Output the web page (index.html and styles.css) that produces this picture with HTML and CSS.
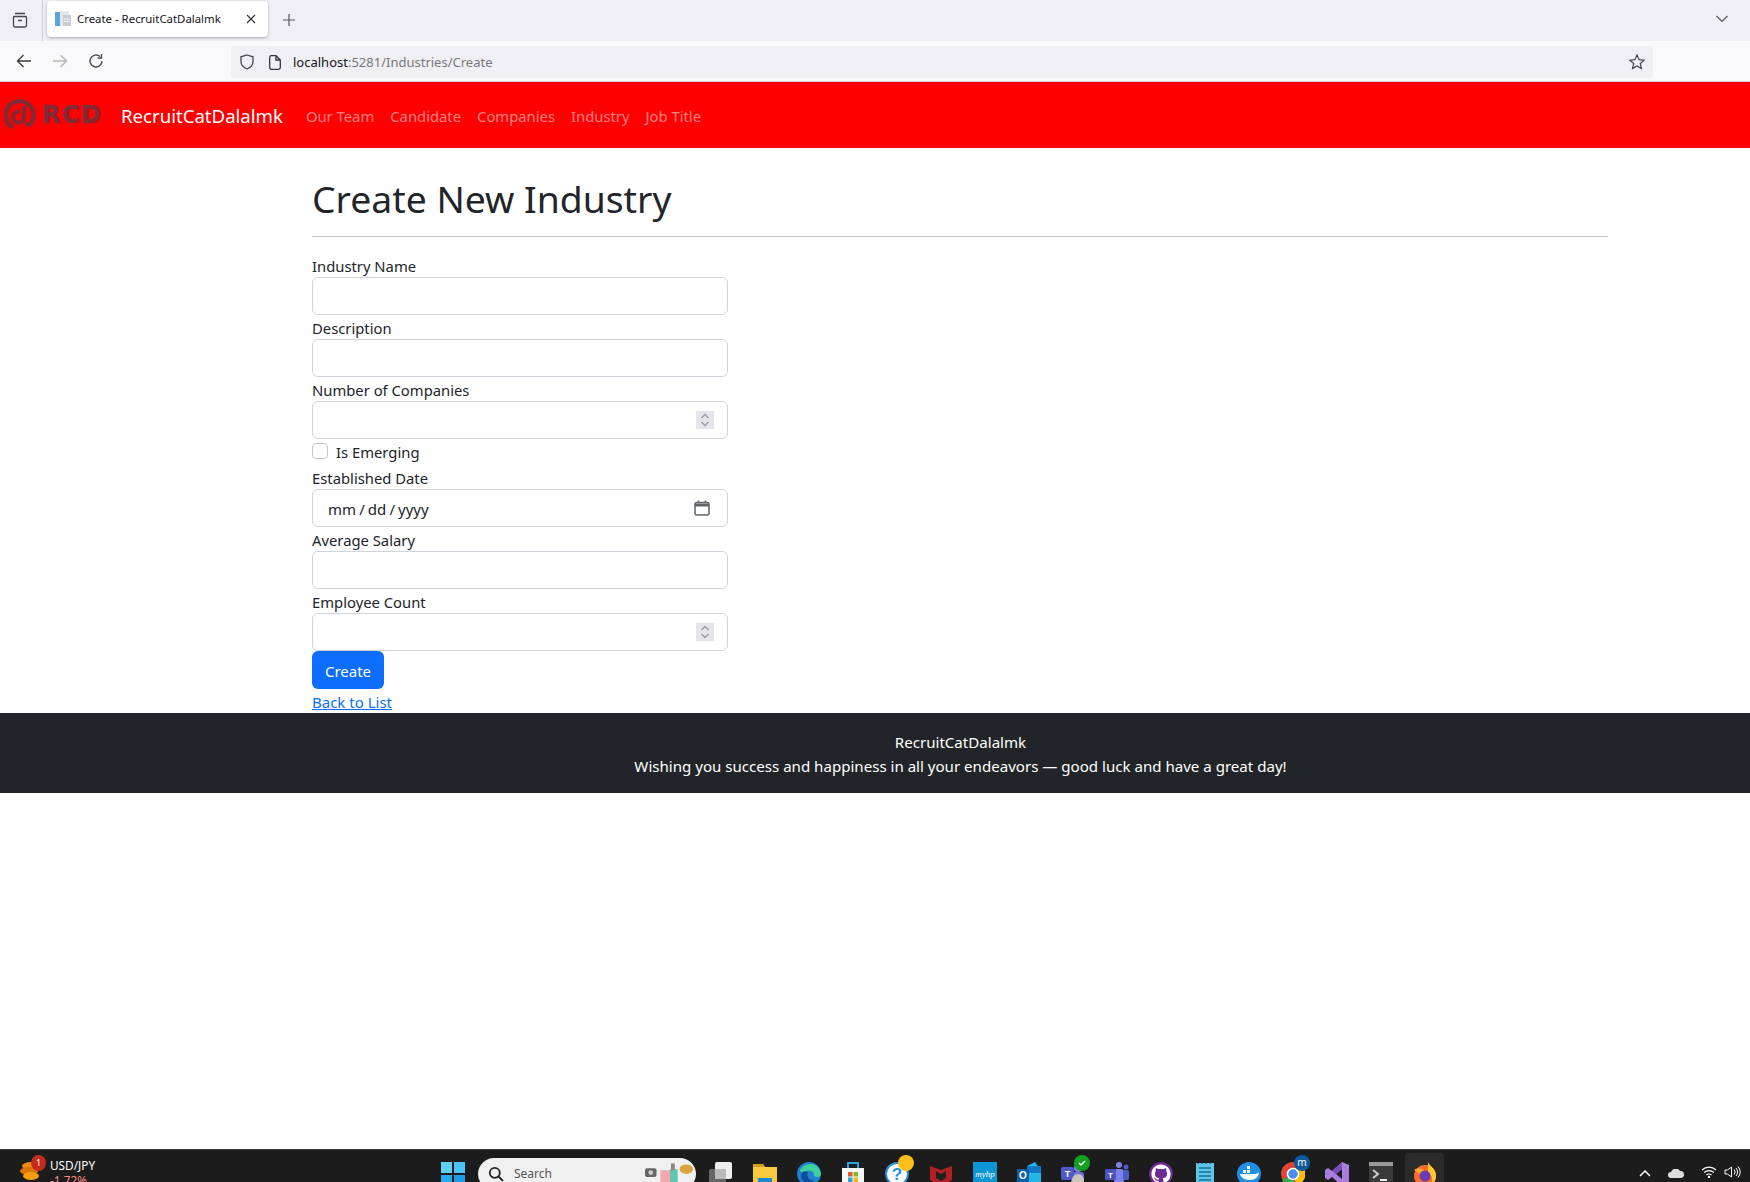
FILE: index.html
```html
<!DOCTYPE html>
<html lang="en">

<head>
    <meta charset="UTF-8">
    <meta name="viewport" content="width=device-width, initial-scale=1.0">
    <title>Create - RecruitCatDalalmk</title>
    <link rel="stylesheet" href="styles.css">
</head>

<body>
    <div class="tabstrip">
        <div class="tabstrip-left">
            <svg class="ico16" viewBox="0 0 16 16" fill="none" stroke="#45454f" stroke-width="1.3"><path d="M3 1.500h10M1.500 5.500a1 1 0 0 1 1-1h11a1 1 0 0 1 1 1v8a1.500 1.500 0 0 1-1.500 1.500H3a1.500 1.500 0 0 1-1.500-1.500zM6 8.500h4"/></svg>
        </div>
        <div class="tab">
            <svg class="favicon" viewBox="0 0 16 16"><rect x="0" y="1" width="5" height="14" fill="#5aa5dc"/><rect x="5" y="0" width="9" height="15" fill="#e3e6ea"/><rect x="8" y="4" width="8" height="11" fill="#c9ced4"/><path d="M9 8h6M9 10.500h6" stroke="#f3f4f5"/></svg>
            <span class="tab-title">Create - RecruitCatDalalmk</span>
            <svg class="tab-close" viewBox="0 0 10 10" stroke="#30303a" stroke-width="1.100"><path d="M1 1l8 8M9 1l-8 8"/></svg>
        </div>
        <svg class="new-tab" viewBox="0 0 12 12" stroke="#55555f" stroke-width="1.200"><path d="M6 0v12M0 6h12"/></svg>
        <svg class="tabs-menu" viewBox="0 0 12 8" fill="none" stroke="#55555f" stroke-width="1.200"><path d="M0.500 1l5.500 5.500L11.500 1"/></svg>
    </div>

    <div class="toolbar">
        <svg class="nav-btn" viewBox="0 0 16 16" fill="none" stroke="#3c3c46" stroke-width="1.400"><path d="M15 8H1.500M7.500 2L1.500 8l6 6"/></svg>
        <svg class="nav-btn" viewBox="0 0 16 16" fill="none" stroke="#b4b4bb" stroke-width="1.400"><path d="M1 8h13.500M8.500 2l6 6-6 6"/></svg>
        <svg class="nav-btn" viewBox="0 0 16 16" fill="none" stroke="#4a4a54" stroke-width="1.400"><path d="M14 8a6 6 0 1 1-2-4.500"/><path d="M13.500 1v4h-4" stroke-width="1.300"/></svg>
        <div class="urlbar">
            <svg class="ico-shield" viewBox="0 0 14 16" fill="none" stroke="#45454f" stroke-width="1.300"><path d="M7 1l6 1.800v4.700c0 3.500-2.500 6-6 7.500-3.500-1.500-6-4-6-7.500V2.800z"/></svg>
            <svg class="ico-doc" viewBox="0 0 12 15" fill="none" stroke="#33333d" stroke-width="1.300"><path d="M2 .7h5l4.300 4.300v7.500a1.800 1.800 0 0 1-1.800 1.800h-7.500a1.800 1.800 0 0 1-1.300-1.800V2.500A1.800 1.800 0 0 1 2 .7zM7 .7V5h4.300"/></svg>
            <span class="url"><span class="url-host">localhost</span>:5281/Industries/Create</span>
            <svg class="ico-star" viewBox="0 0 16 16" fill="none" stroke="#45454f" stroke-width="1.200"><path d="M8 1l2.100 4.700 5 .5-3.800 3.300 1.100 5L8 11.900l-4.400 2.600 1.100-5L.9 6.200l5-.5z"/></svg>
        </div>
    </div>

    <nav class="navbar">
        <a class="logo" href="#">
            <svg class="logo-mark" viewBox="0 0 32 32" fill="none" stroke="#7f2a35" stroke-width="4.500"><path d="M9 28.500A14 14 0 1 1 26 25.500L21 25"/><path d="M20 7v11a5.500 5.500 0 1 1-6-5.500h2" stroke-width="4"/></svg>
            <span class="logo-text">RCD</span>
        </a>
        <a class="brand" href="#">RecruitCatDalalmk</a>
        <ul class="nav-links">
            <li><a href="#">Our Team</a></li>
            <li><a href="#">Candidate</a></li>
            <li><a href="#">Companies</a></li>
            <li><a href="#">Industry</a></li>
            <li><a href="#">Job Title</a></li>
        </ul>
    </nav>

    <main class="content">
        <h1>Create New Industry</h1>
        <hr>
        <form class="create-form">
            <label for="name">Industry Name</label>
            <input class="form-control" id="name" type="text">
            <label for="description">Description</label>
            <input class="form-control" id="description" type="text">
            <label for="companies">Number of Companies</label>
            <div class="form-control field-row">
                <input class="bare-input" id="companies" type="text">
                <span class="spin">
                    <svg viewBox="0 0 10 14" fill="none" stroke="#9a9aa4" stroke-width="1.300"><path d="M1.500 5L5 1.500 8.500 5M1.500 9L5 12.500 8.500 9"/></svg>
                </span>
            </div>
            <div class="check-row">
                <input class="check" id="emerging" type="checkbox">
                <label for="emerging">Is Emerging</label>
            </div>
            <label for="established">Established Date</label>
            <div class="form-control field-row date-field">
                <span id="established">mm / dd / yyyy</span>
                <svg class="calendar" viewBox="0 0 16 16" fill="none" stroke="#5f636a" stroke-width="1.500"><rect x="1" y="2.500" width="14" height="12.500" rx="2"/><path d="M1 5h14" stroke-width="3"/><path d="M4.500 0.500v2.500M11.500 0.500v2.500"/></svg>
            </div>
            <label for="salary">Average Salary</label>
            <input class="form-control" id="salary" type="text">
            <label for="employees">Employee Count</label>
            <div class="form-control field-row">
                <input class="bare-input" id="employees" type="text">
                <span class="spin">
                    <svg viewBox="0 0 10 14" fill="none" stroke="#9a9aa4" stroke-width="1.300"><path d="M1.500 5L5 1.500 8.500 5M1.500 9L5 12.500 8.500 9"/></svg>
                </span>
            </div>
            <button class="btn-create" type="button">Create</button>
        </form>
        <a class="back-link" href="#">Back to List</a>
    </main>

    <footer class="footer">
        <div>RecruitCatDalalmk</div>
        <div>Wishing you success and happiness in all your endeavors — good luck and have a great day!</div>
    </footer>

    <div class="taskbar">
        <div class="widget">
            <svg class="coin" viewBox="0 0 20 26"><ellipse cx="11" cy="5" rx="9" ry="4" fill="#ee8a12"/><ellipse cx="9" cy="10" rx="9" ry="4" fill="#d97706"/><ellipse cx="11" cy="15" rx="8" ry="4" fill="#f59e0b"/><path d="M7 22l4 3 4-3" stroke="#d9480f" stroke-width="3" fill="none"/></svg>
            <span class="badge">1</span>
            <div class="widget-text">
                <div>USD/JPY</div>
                <div class="widget-down">-1.72%</div>
            </div>
        </div>
        <svg class="tb-start" viewBox="0 0 24 24"><rect width="11" height="11" fill="#5fd0f7"/><rect x="13" width="11" height="11" fill="#4cc2f5"/><rect y="13" width="11" height="11" fill="#27a9ee"/><rect x="13" y="13" width="11" height="11" fill="#1d9cea"/></svg>
        <div class="tb-search">
            <svg viewBox="0 0 16 16" fill="none" stroke="#222" stroke-width="1.800"><circle cx="6.800" cy="6.800" r="5"/><path d="M10.500 10.500L15 15"/></svg>
            <span>Search</span>
            <svg class="search-art" viewBox="0 0 52 24"><rect x="0" y="6" width="12" height="9" rx="2" fill="#666"/><circle cx="6" cy="10.500" r="2.500" fill="#ccc"/><rect x="16" y="8" width="10" height="16" fill="#f2a7ad"/><rect x="26" y="7" width="8" height="17" fill="#5fc7b0"/><rect x="27" y="1" width="4" height="7" fill="#888"/><ellipse cx="43" cy="7" rx="7" ry="5" fill="#d9a441"/></svg>
        </div>
        <div class="tb-icons">
            <svg viewBox="0 0 24 24"><rect x="6" y="0" width="17" height="17" rx="2" fill="#eee"/><rect x="0" y="7" width="17" height="17" rx="2" fill="#666"/><rect x="6" y="7" width="11" height="10" fill="#bbb"/></svg>
            <svg viewBox="0 0 24 24"><path d="M0 2h10l2 3h12v19H0z" fill="#f7c93e"/><path d="M0 2h10l2 3H0z" fill="#d59f1e"/><rect x="5" y="16" width="14" height="8" fill="#1c8ad8"/></svg>
            <svg viewBox="0 0 24 24"><circle cx="12" cy="12" r="12" fill="#1f7fd0"/><path d="M3 8C8-1 22 0 24 12c0 3-4 4-7 2 1-3-2-6-6-5-5 1-7 3-8-1z" fill="#3fd0a0"/><path d="M4 14c0-4 4-6 7-4-2 3 0 8 6 9-5 5-13 1-13-5z" fill="#0c4e98"/></svg>
            <svg viewBox="0 0 24 24"><rect x="1" y="6" width="22" height="18" fill="#f7f7f7"/><path d="M7 6V1h10v5" fill="none" stroke="#2aa5e0" stroke-width="2"/><rect x="7" y="10" width="4.500" height="4.500" fill="#e8542f"/><rect x="12.500" y="10" width="4.500" height="4.500" fill="#7eba2a"/><rect x="7" y="15.500" width="4.500" height="4.500" fill="#2aa5e0"/><rect x="12.500" y="15.500" width="4.500" height="4.500" fill="#fbb316"/></svg>
            <span class="tb-with-dot dot-amber">
                <svg viewBox="0 0 24 24"><circle cx="12" cy="12" r="11" fill="#fff" stroke="#2a8fd8" stroke-width="2"/><text x="12" y="18" text-anchor="middle" font-size="17" font-weight="700" font-family="Liberation Sans, sans-serif" fill="#2a8fd8">?</text></svg>
            </span>
            <svg viewBox="0 0 24 24"><path d="M1 4l11 4 11-4v14l-11 6-11-6z" fill="#b32024"/><path d="M7 9l5 3 5-3v7l-5 3-5-3z" fill="#202020"/></svg>
            <svg viewBox="0 0 24 24"><rect width="24" height="24" fill="#0d96d6"/><text x="12" y="15" text-anchor="middle" font-size="9" font-style="italic" font-family="Liberation Serif, serif" fill="#fff">myhp</text></svg>
            <svg viewBox="0 0 24 24"><path d="M10 4l8-4 6 8v12l-6 4H10z" fill="#21b5e8"/><path d="M10 4h14v7H10z" fill="#0f78c8"/><rect x="0" y="7" width="12" height="13" fill="#0f5ea8"/><text x="6" y="17" text-anchor="middle" font-size="10" font-weight="700" font-family="Liberation Sans, sans-serif" fill="#fff">O</text></svg>
            <span class="tb-with-dot dot-green">
                <svg viewBox="0 0 24 24"><circle cx="17" cy="6" r="4" fill="#7b83eb"/><rect x="10" y="10" width="13" height="12" rx="3" fill="#6a72d8"/><rect x="0" y="5" width="13" height="13" rx="2" fill="#5059c9"/><text x="6.500" y="15" text-anchor="middle" font-size="9" font-weight="700" font-family="Liberation Sans, sans-serif" fill="#fff">T</text><circle cx="17" cy="18" r="6" fill="#c9c4bc"/></svg>
                <svg class="tick" viewBox="0 0 10 10" fill="none" stroke="#fff" stroke-width="1.500"><path d="M2 5l2 2 4-4"/></svg>
            </span>
            <svg viewBox="0 0 24 24"><circle cx="14" cy="3" r="3" fill="#7b83eb"/><circle cx="21" cy="5" r="2.500" fill="#5059c9"/><rect x="9" y="7" width="10" height="14" rx="3" fill="#7b83eb"/><rect x="18" y="8" width="6" height="10" rx="2" fill="#5059c9"/><rect x="0" y="7" width="11" height="11" rx="1.500" fill="#4b53bc"/><text x="5.500" y="15.500" text-anchor="middle" font-size="8" font-weight="700" font-family="Liberation Sans, sans-serif" fill="#fff">T</text></svg>
            <svg viewBox="0 0 24 24"><circle cx="12" cy="12" r="12" fill="#6e2c91"/><path transform="translate(2.400 2.400) scale(1.200)" fill="#fff" d="M8 0C3.580 0 0 3.580 0 8c0 3.540 2.290 6.530 5.470 7.590.4.07.55-.17.55-.38 0-.19-.01-.82-.01-1.490-2.010.37-2.530-.49-2.690-.94-.09-.23-.48-.94-.82-1.130-.28-.15-.68-.52-.01-.53.63-.01 1.080.58 1.230.82.72 1.210 1.870.87 2.330.66.07-.52.28-.87.51-1.070-1.780-.2-3.640-.89-3.640-3.950 0-.87.31-1.590.82-2.150-.08-.2-.36-1.020.08-2.120 0 0 .67-.21 2.200.82.64-.18 1.320-.27 2-.27.68 0 1.360.09 2 .27 1.530-1.040 2.200-.82 2.200-.82.44 1.100.16 1.920.08 2.120.51.56.82 1.270.82 2.150 0 3.070-1.870 3.750-3.650 3.950.29.25.54.73.54 1.480 0 1.070-.01 1.930-.01 2.200 0 .21.15.46.55.38A8.013 8.013 0 0 0 16 8c0-4.420-3.580-8-8-8z"/></svg>
            <svg viewBox="0 0 24 24"><rect x="3" y="1" width="18" height="23" fill="#5fc6ea"/><path d="M6 6h12M6 10h12M6 14h12M6 18h12" stroke="#176f93" stroke-width="1.500"/><path d="M5 0v2M9 0v2M13 0v2M17 0v2" stroke="#2b2b2b"/></svg>
            <svg viewBox="0 0 24 24"><circle cx="12" cy="12" r="12" fill="#1d8fe6"/><path d="M3 12h15c2 0 3-1 4-2 0 5-4 8-9 8-5 0-9-2-10-6z" fill="#fff"/><path d="M6 8h3v3H6zM10 8h3v3h-3zM10 4h3v3h-3z" fill="#fff"/></svg>
            <span class="tb-with-dot dot-blue">
                <svg viewBox="0 0 24 24"><circle cx="12" cy="12" r="12" fill="#e04434"/><path d="M12 12L1 18a12 12 0 0 0 14 5.500z" fill="#36a852"/><path d="M12 6h11a12 12 0 0 1-8 17.500z" fill="#fbbc04"/><circle cx="12" cy="12" r="5.500" fill="#4b8df0" stroke="#fff" stroke-width="1.500"/></svg>
                <span class="dot-letter">m</span>
            </span>
            <svg viewBox="0 0 24 24"><path d="M17 0l7 3v18l-7 3-10-9-4 3-3-2V8l3-2 4 3z" fill="#a97de0"/><path d="M17 7l-6 5 6 5z" fill="#1f1f1f"/><path d="M17 0L7 9l4 3 6-5z" fill="#7a4cb8"/></svg>
            <svg viewBox="0 0 24 24"><rect width="24" height="24" rx="2" fill="#3a3a3a"/><rect width="24" height="4" fill="#9a9a9a"/><path d="M4 8l5 4-5 4" fill="none" stroke="#ccc" stroke-width="2"/><path d="M11 18h7" stroke="#eee" stroke-width="2"/></svg>
            <span class="tb-active">
                <svg viewBox="0 0 24 24"><circle cx="12" cy="14" r="11" fill="#ff6a2b"/><path d="M15 0c2 5 8 6 8 14 0 5-3 8-6 9 4-4 2-10-2-12z" fill="#ffcb2e"/><path d="M1 8c3-2 8-2 10 1l-4 3z" fill="#ffa72e"/><circle cx="12" cy="14" r="5.500" fill="#6b3bb8"/></svg>
            </span>
        </div>
        <div class="tray">
            <svg class="tray-chev" viewBox="0 0 12 7" fill="none" stroke="#fff" stroke-width="1.500"><path d="M1 6l5-5 5 5"/></svg>
            <svg class="tray-cloud" viewBox="0 0 16 9"><path d="M3 9a3 3 0 0 1 0-6 5 5 0 0 1 9-1 3.500 3.500 0 0 1 1 7z" fill="#ddd"/></svg>
            <svg class="tray-wifi" viewBox="0 0 16 12" fill="none" stroke="#fff" stroke-width="1.100"><path d="M1 4a10 10 0 0 1 14 0M3.200 6.500a7 7 0 0 1 9.600 0M5.500 9a3.500 3.500 0 0 1 5 0"/><circle cx="8" cy="11" r=".6" fill="#fff"/></svg>
            <svg class="tray-sound" viewBox="0 0 17 12" fill="none" stroke="#fff" stroke-width="1"><path d="M1 4h2.500L7.500 1v10l-4-3H1zM10 3.500a3.500 3.500 0 0 1 0 5M12 2a6 6 0 0 1 0 8M14 .5a8 8 0 0 1 0 11"/></svg>
        </div>
    </div>
</body>

</html>
```

FILE: styles.css
```css
html,
body {
    height: 100%;
}

body {
    margin: 0px;
    height: 100vh;
    overflow: hidden;
    display: flex;
    flex-direction: column;
    font-family: "Noto Sans", "Liberation Sans", sans-serif;
    font-size: 15px;
    line-height: 24px;
    color: #212529;
    background: #fff;
}

svg {
    display: block;
    flex: none;
}

a {
    text-decoration: none;
}

/* browser chrome */
.tabstrip {
    height: 41px;
    background: #f0eff4;
    display: flex;
    align-items: flex-start;
    flex: none;
}

.tabstrip-left {
    width: 43px;
    height: 41px;
    box-sizing: border-box;
    padding: 12px;
    border-right: 1px solid #cfcfd6;
}

.ico16 {
    width: 16px;
    height: 16px;
}

.tab {
    margin: 1px 0px 0px 4px;
    width: 221px;
    height: 36px;
    box-sizing: border-box;
    padding: 0px 12px 0px 8px;
    background: #fff;
    border-radius: 4px;
    box-shadow: 0 1px 3px rgba(0, 0, 0, .3);
    display: flex;
    align-items: center;
    font-size: 11.400px;
    color: #15141a;
}

.favicon {
    width: 16px;
    height: 16px;
    margin-right: 6px;
}

.tab-title {
    flex: 1;
    white-space: nowrap;
}

.tab-close {
    width: 10px;
    height: 10px;
}

.new-tab {
    width: 12px;
    height: 12px;
    margin: 14px 0px 0px 15px;
}

.tabs-menu {
    width: 12px;
    height: 8px;
    margin: 15px 22px 0px auto;
}

.toolbar {
    height: 41px;
    box-sizing: border-box;
    background: #f9f9fb;
    border-bottom: 1px solid #cfcfd8;
    display: flex;
    align-items: center;
    padding-left: 16px;
    flex: none;
}

.nav-btn {
    width: 16px;
    height: 16px;
    margin-right: 20px;
}

.urlbar {
    margin-left: 107px;
    margin-top: 2px;
    width: 1422px;
    height: 32px;
    box-sizing: border-box;
    padding: 0px 8px 0px 9px;
    background: #f0f0f4;
    border-radius: 4px;
    display: flex;
    align-items: center;
    font-size: 13px;
    color: #77777f;
}

.ico-shield {
    width: 14px;
    height: 16px;
    margin-right: 15px;
}

.ico-doc {
    width: 12px;
    height: 15px;
    margin-right: 12px;
}

.url {
    flex: 1;
}

.url-host {
    color: #15141a;
}

.ico-star {
    width: 16px;
    height: 16px;
}

/* site */
.navbar {
    height: 66px;
    box-sizing: border-box;
    background: #f00;
    display: flex;
    align-items: center;
    padding: 2px 0px 0px 4px;
    flex: none;
}

.logo {
    display: flex;
    align-items: center;
    width: 117px;
    gap: 6px;
    margin-top: -2px;
}

.logo-mark {
    width: 32px;
    height: 32px;
}

.logo-text {
    font-family: "DejaVu Sans", sans-serif;
    font-weight: 700;
    font-size: 24px;
    letter-spacing: 1.500px;
    -webkit-text-stroke: .6px #7f2a35;
    color: #7f2a35;
}

.brand {
    font-size: 18.600px;
    color: #fff;
    margin-right: 23px;
    white-space: nowrap;
}

.nav-links {
    display: flex;
    gap: 16px;
    list-style: none;
    margin: 0px;
    padding: 0px;
    font-size: 14.800px;
}

.nav-links a {
    color: rgba(255, 255, 255, .5);
}

.content {
    padding: 0px 141px 0px 312px;
    flex: none;
}

h1 {
    font-size: 37.300px;
    font-weight: 400;
    line-height: 48px;
    margin: 0px;
    padding-top: 27px;
}

hr {
    border: 0;
    border-top: 1px solid #c8c8c8;
    margin: 13px 1px 0px 0px;
    height: 0px;
}

.create-form {
    width: 416px;
    padding-top: 16px;
    display: flex;
    flex-direction: column;
    align-items: flex-start;
}

.create-form label {
    height: 24px;
    line-height: 26px;
    font-size: 14.800px;
}

.create-form .check-row label {
    line-height: 24px;
}

.form-control {
    width: 416px;
    height: 38px;
    box-sizing: border-box;
    border: 1px solid #ced4da;
    border-radius: 6px;
    background: #fff;
    padding: 6px 12px;
    font: inherit;
    flex: none;
}

.field-row {
    display: flex;
    align-items: center;
    justify-content: space-between;
}

.bare-input {
    border: 0;
    outline: 0;
    padding: 0px;
    font: inherit;
    flex: 1;
    min-width: 0;
}

.spin {
    width: 18px;
    height: 18px;
    background: #e4e4ea;
    display: flex;
    align-items: center;
    justify-content: center;
    margin-right: 1px;
}

.spin svg {
    width: 10px;
    height: 14px;
}

.date-field {
    padding: 7px 17px 5px 15px;
    word-spacing: -.8px;
}

.calendar {
    width: 16px;
    height: 16px;
    margin-top: -2px;
}

.check-row {
    height: 26px;
    display: flex;
    align-items: center;
    gap: 8px;
}

.check {
    appearance: none;
    width: 16px;
    height: 16px;
    box-sizing: border-box;
    margin: 0px 0px 2px 0px;
    border: 1px solid #c4c8cc;
    border-radius: 4px;
    background: #fff;
}

.btn-create {
    width: 72px;
    height: 38px;
    border: 0;
    border-radius: 6px;
    background: #0d6efd;
    color: #fff;
    font: inherit;
    padding: 2px 0px 0px 0px;
}

.back-link {
    color: #0d6efd;
    text-decoration: underline;
    display: block;
    width: fit-content;
    height: 24px;
    line-height: 26px;
}

.footer {
    height: 80px;
    box-sizing: border-box;
    margin-top: 0px;
    padding: 17px 141px 0px 312px;
    background: #212529;
    color: #fff;
    font-size: 15.080px;
    text-align: center;
    flex: none;
}

/* windows taskbar, cut off by the bottom of the shot */
.taskbar {
    margin-top: auto;
    height: 33px;
    flex: none;
    background: #1c1c1c;
    border-top: 1px solid #3a3a3a;
    box-sizing: border-box;
    display: flex;
    align-items: flex-start;
    position: relative;
    overflow: hidden;
    color: #fff;
}

.widget {
    width: 441px;
    height: 32px;
    display: flex;
    padding-left: 20px;
    box-sizing: border-box;
    position: relative;
}

.coin {
    width: 20px;
    height: 26px;
    margin-top: 11px;
}

.badge {
    position: absolute;
    left: 31px;
    top: 5px;
    width: 15px;
    height: 16px;
    border-radius: 50%;
    background: #c42b1c;
    color: #fff;
    font-size: 9px;
    line-height: 16px;
    text-align: center;
}

.widget-text {
    margin-left: 10px;
    font-size: 11.800px;
    line-height: 15px;
    padding-top: 8px;
}

.widget-down {
    color: #f48a8a;
}

.tb-start {
    width: 24px;
    height: 24px;
    margin-top: 12px;
}

.tb-search {
    margin: 8px 0px 0px 13px;
    width: 218px;
    height: 32px;
    box-sizing: border-box;
    border-radius: 16px;
    background: #f0f0f0;
    color: #555;
    display: flex;
    align-items: center;
    padding: 0px 0px 0px 10px;
    font-size: 12px;
    gap: 10px;
}

.tb-search > svg:first-child {
    width: 16px;
    height: 16px;
}

.search-art {
    width: 50px;
    height: 24px;
    margin-left: auto;
    margin-right: 1px;
}

.tb-icons {
    margin-left: 13px;
    padding-top: 12px;
    display: flex;
    gap: 20px;
}

.tb-icons svg {
    width: 24px;
    height: 24px;
}

.tb-with-dot {
    display: block;
    width: 24px;
    height: 24px;
    position: relative;
}

.tb-with-dot::after {
    content: "";
    position: absolute;
    left: 13px;
    top: -7px;
    width: 16px;
    height: 16px;
    border-radius: 50%;
}

.dot-amber::after {
    background: #fbbf1a;
}

.dot-green::after {
    background: #12a11e;
}

.dot-blue::after {
    background: #0f5a9e;
}

.tb-with-dot .tick {
    position: absolute;
    left: 16px;
    top: -4px;
    width: 10px;
    height: 10px;
    z-index: 1;
}

.dot-letter {
    position: absolute;
    left: 13px;
    top: -7px;
    width: 16px;
    height: 16px;
    font-size: 10px;
    line-height: 14px;
    text-align: center;
    color: #fff;
    z-index: 1;
}

.tb-active {
    display: block;
    width: 24px;
    height: 24px;
    position: relative;
}

.tb-active::before {
    content: "";
    position: absolute;
    left: -8px;
    top: -9px;
    width: 39px;
    height: 40px;
    border-radius: 4px;
    background: #2b2b2b;
}

.tb-active svg {
    position: relative;
}

.tray {
    margin-left: auto;
    display: flex;
    padding: 20px 9px 0px 0px;
}

.tray-chev {
    width: 12px;
    height: 7px;
}

.tray-cloud {
    width: 16px;
    height: 9px;
    margin: -1px 0px 0px 17px;
}

.tray-wifi {
    width: 16px;
    height: 12px;
    margin: -4px 0px 0px 17px;
}

.tray-sound {
    width: 17px;
    height: 12px;
    margin: -4px 0px 0px 7px;
}
```
